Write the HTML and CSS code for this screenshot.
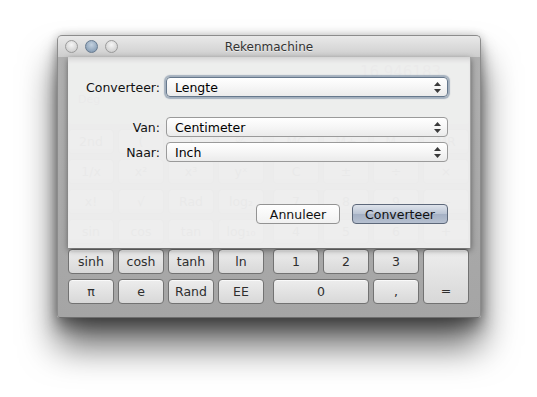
FILE: index.html
```html
<!DOCTYPE html>
<html lang="nl">
<head>
    <meta charset="UTF-8">
    <meta name="viewport" content="width=device-width, initial-scale=1.0">
    <title>Rekenmachine</title>
    <link rel="stylesheet" href="styles.css">
</head>
<body>
    <!-- Calculator window -->
    <div class="window">
        <div class="titlebar">
            <div class="lights">
                <span class="light"></span>
                <span class="light light-mid"></span>
                <span class="light"></span>
            </div>
            <div class="title">Rekenmachine</div>
            <div></div>
        </div>

        <div class="body">
            <!-- Display (mostly hidden under the sheet) -->
            <div class="display">
                <span class="value">16.946183</span>
                <span class="mode">Deg</span>
            </div>

            <!-- Keypad: scientific keys left, numbers right -->
            <div class="keypad">
                <div class="keys">
                    <div class="key">2nd</div><div class="key">(</div><div class="key">)</div><div class="key">%</div>
                    <div class="key">1/x</div><div class="key">x²</div><div class="key">x³</div><div class="key">yˣ</div>
                    <div class="key">x!</div><div class="key">√</div><div class="key">Rad</div><div class="key">log₂</div>
                    <div class="key">sin</div><div class="key">cos</div><div class="key">tan</div><div class="key">log₁₀</div>
                    <div class="key">sinh</div><div class="key">cosh</div><div class="key">tanh</div><div class="key">ln</div>
                    <div class="key">π</div><div class="key">e</div><div class="key">Rand</div><div class="key">EE</div>
                </div>
                <div class="keys">
                    <div class="key">MC</div><div class="key">M+</div><div class="key">M−</div><div class="key">MR</div>
                    <div class="key">C</div><div class="key">±</div><div class="key">÷</div><div class="key">×</div>
                    <div class="key">7</div><div class="key">8</div><div class="key">9</div><div class="key">−</div>
                    <div class="key">4</div><div class="key">5</div><div class="key">6</div><div class="key">+</div>
                    <div class="key">1</div><div class="key">2</div><div class="key">3</div><div class="key key-equals">=</div>
                    <div class="key key-zero">0</div><div class="key">,</div>
                </div>
            </div>
        </div>

        <!-- Conversion sheet over the window -->
        <div class="sheet">
            <div class="form-row row-type">
                <label class="label">Converteer:</label>
                <div class="popup popup-focus">
                    <span>Lengte</span>
                    <svg class="arrows" width="7" height="11" viewBox="0 0 7 11"><polygon points="3.5,0 7,4 0,4" /><polygon points="0,7 7,7 3.5,11" /></svg>
                </div>
            </div>
            <div class="form-row row-from">
                <label class="label">Van:</label>
                <div class="popup">
                    <span>Centimeter</span>
                    <svg class="arrows" width="7" height="11" viewBox="0 0 7 11"><polygon points="3.5,0 7,4 0,4" /><polygon points="0,7 7,7 3.5,11" /></svg>
                </div>
            </div>
            <div class="form-row">
                <label class="label">Naar:</label>
                <div class="popup">
                    <span>Inch</span>
                    <svg class="arrows" width="7" height="11" viewBox="0 0 7 11"><polygon points="3.5,0 7,4 0,4" /><polygon points="0,7 7,7 3.5,11" /></svg>
                </div>
            </div>
            <div class="buttons">
                <button class="btn btn-cancel">Annuleer</button>
                <button class="btn btn-default">Converteer</button>
            </div>
        </div>
    </div>
</body>
</html>
```

FILE: styles.css
```css
/* Page: fill the whole viewport so the window shadow is painted */
html {
    height: 100%;
    background: #ffffff;
}

body {
    margin: 0;
    min-height: 100%;
    overflow: hidden;
    font-family: "DejaVu Sans", "Liberation Sans", sans-serif;
    font-size: 12.5px;
    color: #111111;
}

/* Window frame */
.window {
    position: relative; /* anchor for the sheet */
    margin: 35px 0 0 57px;
    width: 424px;
    box-sizing: border-box;
    border: 1px solid #8c8c8c;
    border-bottom-color: #6f6f6f;
    border-radius: 5px 5px 3px 3px;
    background: linear-gradient(#b4b4b4, #a6a6a6);
    box-shadow: 0 28px 36px rgba(0, 0, 0, 0.6), 0 10px 16px rgba(0, 0, 0, 0.35), 0 0 10px rgba(0, 0, 0, 0.2);
}

/* Title bar */
.titlebar {
    height: 21px;
    display: grid;
    grid-template-columns: 1fr auto 1fr;
    align-items: center;
    padding-left: 7px;
    border-radius: 4px 4px 0 0;
    background: linear-gradient(#e9e9e9, #cdcdcd);
}

.lights {
    display: flex;
    gap: 7px;
}

.light {
    width: 13px;
    height: 13px;
    box-sizing: border-box;
    border-radius: 50%;
    border: 1px solid #9b9b9b;
    background: radial-gradient(circle at 50% 35%, #f6f6f6, #c4c4c4);
}

.light-mid {
    border-color: #687b90;
    background: radial-gradient(circle at 50% 35%, #c4d2e0, #7890aa);
}

.title {
    font-size: 12px;
    color: #333333;
    text-shadow: 0 1px 0 rgba(255, 255, 255, 0.5);
    padding-right: 7px;
}

/* Calculator body */
.body {
    padding: 6px 11px 13px 10px;
    border-radius: 0 0 3px 3px;
    background: linear-gradient(#b0b0b0, #a5a5a5);
}

.display {
    height: 61px;
    margin-bottom: 5px;
    display: flex;
    flex-direction: column;
    justify-content: space-between;
    background: #d9dcd4;
    border-radius: 3px;
    color: #555555;
}

.value {
    align-self: flex-end;
    font-size: 15px;
    padding-right: 28px;
}

.mode {
    font-size: 11px;
    padding: 0 0 18px 10px;
}

/* Keypad */
.keypad {
    display: flex;
    gap: 9px;
}

.keys {
    display: grid;
    grid-template-columns: repeat(4, 46px);
    grid-auto-rows: 25px;
    column-gap: 4px;
    row-gap: 5px;
}

.key {
    display: flex;
    justify-content: center;
    align-items: center;
    box-sizing: border-box;
    border: 1px solid #727272;
    border-radius: 4px;
    background: linear-gradient(#ededed, #d8d8d8);
    box-shadow: inset 0 1px 0 rgba(255, 255, 255, 0.7);
    color: #2e2e2e;
    font-size: 12.5px;
}

.key-zero {
    grid-column: span 2;
}

.key-equals {
    grid-row: span 2;
    align-items: flex-end;
    padding-bottom: 5px;
}

/* Sheet dialog */
.sheet {
    position: absolute;
    top: 21px;
    left: 10px;
    width: 403px;
    height: 191px;
    box-sizing: border-box;
    padding: 20px 22px 0 14px;
    background: rgba(238, 238, 238, 0.975);
    border-right: 1px solid #a0a0a0;
    box-shadow: 0 2px 6px rgba(0, 0, 0, 0.45), inset 0 5px 5px -3px rgba(0, 0, 0, 0.12);
}

.form-row {
    display: flex;
    align-items: center;
    gap: 6px;
    margin-bottom: 5px;
}

.row-type {
    margin-bottom: 20px;
}

.label {
    width: 78px;
    text-align: right;
    color: #111111;
}

.popup {
    flex: 1;
    height: 20px;
    box-sizing: border-box;
    display: flex;
    align-items: center;
    justify-content: space-between;
    padding: 0 6px 0 8px;
    border: 1px solid #9a9a9a;
    border-radius: 4px;
    background: linear-gradient(#ffffff, #f6f6f6 50%, #ebebeb);
    color: #000000;
}

.popup-focus {
    border-color: #66788c;
    box-shadow: 0 0 1px 2px rgba(104, 126, 152, 0.55);
}

.arrows {
    fill: #3a3a3a;
}

/* Dialog buttons */
.buttons {
    display: flex;
    justify-content: flex-end;
    gap: 12px;
    margin-top: 42px;
}

.btn {
    height: 20px;
    padding: 0;
    border-radius: 4px;
    font-family: inherit;
    font-size: 12.5px;
    color: #111111;
}

.btn-cancel {
    width: 84px;
    border: 1px solid #939393;
    background: linear-gradient(#ffffff, #f1f1f1);
}

.btn-default {
    width: 96px;
    border: 1px solid #5d687a;
    background: linear-gradient(#dfe4ec, #b9c3d3 50%, #a4b0c4 51%, #b6c0d0);
}
```
